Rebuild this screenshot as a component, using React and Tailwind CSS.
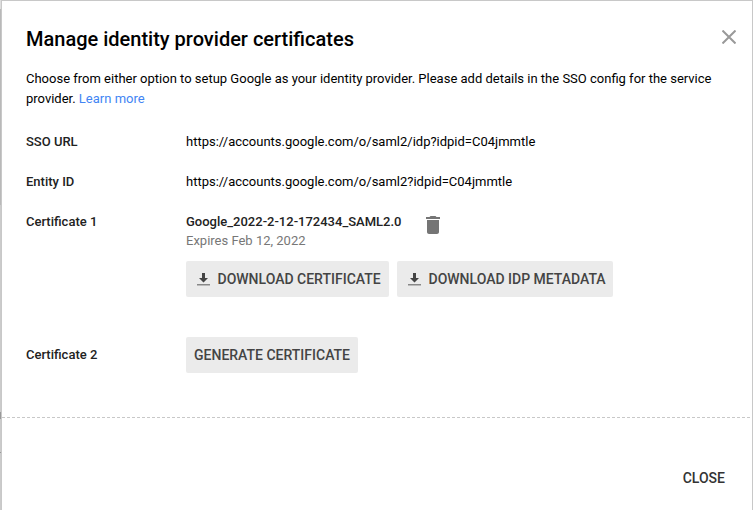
const label = 'w-[160px] shrink-0 text-[13px] leading-5 font-medium text-[#222]';
const button = 'flex h-9 items-center rounded-[2px] bg-[#ebebeb] text-[14px] font-medium text-[#444] whitespace-nowrap';

function DownloadIcon() {
  return (
    <svg className="mr-[5.500px] size-[18px] shrink-0" viewBox="0 0 18 18">
      <path d="M8 3h3v5h3l-4.500 4.500L5 8h3z" fill="#444" />
      <path d="M3 14h13v1.500H3z" fill="#888" />
    </svg>
  );
}

// Sliver of the page behind the dialog, visible along its left edge.
function PageEdge() {
  return (
    <div className="flex w-px shrink-0 flex-col bg-[#cbcbcb]">
      <div className="h-[9px] bg-[#dedede]" />
      <div className="h-[196px] bg-[#b9b9b9]" />
      <div className="mt-[207px] h-[7px] bg-[#999]" />
      <div className="mt-[33px] h-px bg-[#999]" />
    </div>
  );
}

export default function App() {
  return (
    <div className="flex h-[510px] w-[753px] overflow-hidden">
      <PageEdge />
      <div className="flex grow flex-col border-x border-t border-[#c8c8c8] bg-white font-['Roboto',sans-serif] text-[13px] text-black">
        <main className="h-[416px] shrink-0 px-6 pt-[24px]">
          <header className="flex h-7 items-center justify-between">
            <h1 className="text-[20px] leading-7 font-medium whitespace-nowrap">Manage identity provider certificates</h1>
            <button aria-label="Close dialog" className="-mt-1 -mr-2">
              <svg className="size-[14px]" viewBox="0 0 14 14" stroke="#999" strokeWidth="2"><path d="M.5.5l13 13M13.500.5l-13 13" /></svg>
            </button>
          </header>
          <p className="mt-4 leading-5 whitespace-nowrap">Choose from either option to setup Google as your identity provider. Please add details in the SSO config for the service<br />provider. <a className="text-[#4285f4]">Learn more</a></p>
          <div className="mt-[23px] flex h-5"><div className={label}>SSO URL</div><div className="leading-5">https://accounts.google.com/o/saml2/idp?idpid=C04jmmtle</div></div>
          <div className="mt-5 flex h-5"><div className={label}>Entity ID</div><div className="leading-5">https://accounts.google.com/o/saml2?idpid=C04jmmtle</div></div>
          <div className="mt-5 flex">
            <div className={label}>Certificate 1</div>
            <div>
              <div className="flex">
                <div><div className="leading-5 font-medium text-[#222]">Google_2022-2-12-172434_SAML2.0</div><div className="leading-[18px] text-[#777]">Expires Feb 12, 2022</div></div>
                <svg className="mt-px ml-5 size-6" viewBox="0 0 24 24" fill="#757575"><path d="M6 19c0 1.100.9 2 2 2h8c1.100 0 2-.9 2-2V7H6zM19 4h-3.500l-1-1h-5l-1 1H5v2h14z" /></svg>
              </div>
              <div className="mt-[11px] flex gap-2">
                <button className={`${button} w-[203px] pl-2`}><DownloadIcon />DOWNLOAD CERTIFICATE</button>
                <button className={`${button} w-[216px] pl-2`}><DownloadIcon />DOWNLOAD IDP METADATA</button>
              </div>
            </div>
          </div>
          <div className="mt-10 flex items-center"><div className={label}>Certificate 2</div><button className={`${button} w-[172px] pl-2`}>GENERATE CERTIFICATE</button></div>
        </main>
        <div className="h-px shrink-0 bg-[repeating-linear-gradient(90deg,#c8c8c8_0_3px,transparent_3px_5px)]" />
        <footer className="flex grow items-center justify-end pt-7 pr-[27px]"><button className="text-[14px] leading-5 font-medium text-[#333]">CLOSE</button></footer>
      </div>
    </div>
  );
}
